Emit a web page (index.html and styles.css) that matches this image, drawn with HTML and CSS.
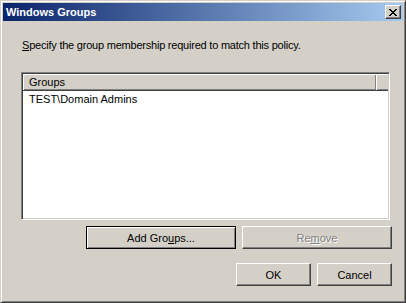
FILE: index.html
```html
<!DOCTYPE html>
<html lang="en">
<head>
    <meta charset="UTF-8">
    <meta name="viewport" content="width=device-width, initial-scale=1.0">
    <title>Windows Groups</title>
    <link rel="stylesheet" href="styles.css">
</head>
<body>
    <div class="window">
        <div class="titlebar">
            <span class="title">Windows Groups</span>
            <button class="close-btn" aria-label="Close">
                <svg width="8" height="7" viewBox="0 0 8 7" shape-rendering="crispEdges">
                    <path fill="#000" d="M0 0h2v1H0zM6 0h2v1H6zM1 1h2v1H1zM5 1h2v1H5zM2 2h4v1H2zM3 3h2v1H3zM2 4h4v1H2zM1 5h2v1H1zM5 5h2v1H5zM0 6h2v1H0zM6 6h2v1H6z"/>
                </svg>
            </button>
        </div>
        <div class="content">
            <p class="prompt"><u>S</u>pecify the group membership required to match this policy.</p>
            <div class="listview">
                <div class="lv-header">
                    <div class="lv-col">Groups</div>
                    <div class="lv-filler"></div>
                </div>
                <ul class="lv-items">
                    <li>TEST\Domain Admins</li>
                </ul>
            </div>
            <div class="button-row">
                <button class="btn btn-wide btn-default">Add Gro<u>u</u>ps...</button>
                <button class="btn btn-wide" disabled>Re<u>m</u>ove</button>
            </div>
            <div class="button-row button-row-last">
                <button class="btn">OK</button>
                <button class="btn">Cancel</button>
            </div>
        </div>
    </div>
</body>
</html>
```

FILE: styles.css
```css
body {
    margin: 0;
    padding: 0;
    background-color: #d4d0c8;
    font-family: Tahoma, 'Liberation Sans', Arial, sans-serif;
    font-size: 11px;
    color: #000;
}
.window {
    width: 406px;
    height: 303px;
    box-sizing: border-box;
    border: 1px solid;
    border-color: #d4d0c8 #404040 #404040 #d4d0c8;
    box-shadow: inset 1px 1px #fff, inset -1px -1px #808080;
    padding: 2px;
    background-color: #d4d0c8;
}
.titlebar {
    height: 18px;
    display: flex;
    align-items: flex-start;
    justify-content: space-between;
    background: linear-gradient(to right, #0a246a, #a6caf0);
}
.title {
    color: #fff;
    font-weight: bold;
    line-height: 18px;
    padding-left: 3px;
}
.close-btn {
    width: 16px;
    height: 14px;
    margin: 2px 2px 0 0;
    padding: 0;
    display: flex;
    align-items: center;
    justify-content: center;
    background-color: #d4d0c8;
    border: 1px solid;
    border-color: #fff #404040 #404040 #fff;
    box-shadow: inset -1px -1px #808080;
}
.content {
    padding: 18px 11px 0 18px;
}
.prompt {
    margin: 0 0 0 1px;
    line-height: 13px;
    letter-spacing: -0.22px;
}
.prompt u, .btn u {
    text-decoration: underline;
}
.listview {
    width: 369px;
    height: 148px;
    box-sizing: border-box;
    margin-top: 20px;
    border: 1px solid;
    border-color: #808080 #fff #fff #808080;
    box-shadow: inset 1px 1px #404040, inset -1px -1px #d4d0c8;
    padding: 1px;
    background-color: #fff;
}
.lv-header {
    display: flex;
    height: 17px;
    box-sizing: border-box;
    border-bottom: 1px solid #404040;
    background-color: #d4d0c8;
}
.lv-col {
    width: 353px;
    box-sizing: border-box;
    padding-left: 6px;
    line-height: 16px;
    box-shadow: inset 1px 1px #fff, inset -1px -1px #808080;
}
.lv-filler {
    flex: 1;
    box-shadow: inset 1px 1px #fff, inset 0 -1px #808080;
}
.lv-items {
    list-style: none;
    margin: 0;
    padding: 1px 0 0 0;
}
.lv-items li {
    padding-left: 6px;
    line-height: 14px;
}
.button-row {
    display: flex;
    justify-content: flex-end;
    gap: 6px;
    margin-top: 6px;
}
.button-row-last {
    margin-top: 14px;
}
.btn {
    width: 75px;
    height: 23px;
    padding: 0;
    font-family: inherit;
    font-size: 11px;
    color: #000;
    background-color: #d4d0c8;
    border: 1px solid;
    border-color: #fff #404040 #404040 #fff;
    box-shadow: inset -1px -1px #808080;
}
.btn-wide {
    width: 150px;
}
.btn-default {
    border-color: #000;
    box-shadow: inset 1px 1px #fff, inset -1px -1px #808080;
}
.btn:disabled {
    color: #808080;
    text-shadow: 1px 1px #fff;
}
```
